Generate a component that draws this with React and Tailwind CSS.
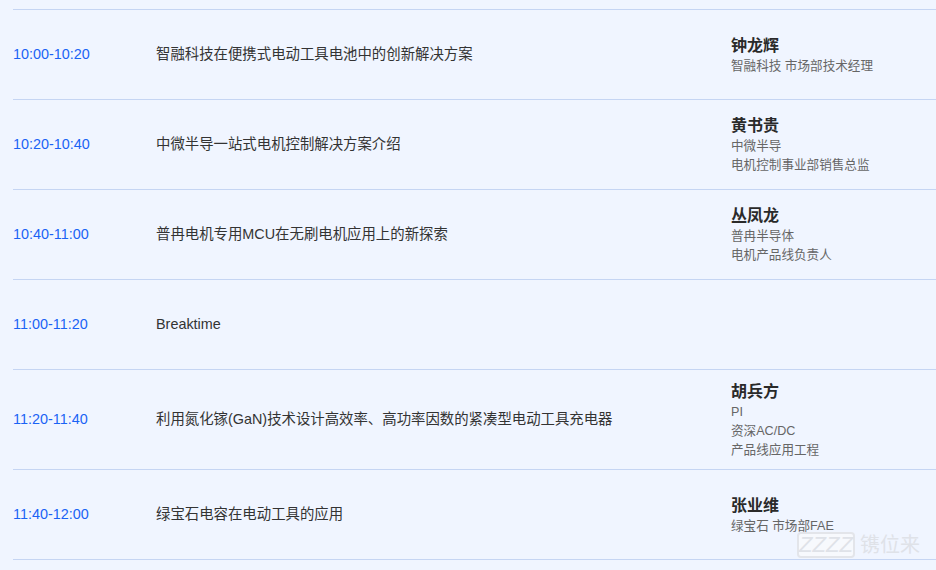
import React from "react";

const rows = [
  { time: "10:00-10:20", title: "智融科技在便携式电动工具电池中的创新解决方案", name: "钟龙辉", info: ["智融科技 市场部技术经理"] },
  { time: "10:20-10:40", title: "中微半导一站式电机控制解决方案介绍", name: "黄书贵", info: ["中微半导", "电机控制事业部销售总监"] },
  { time: "10:40-11:00", title: "普冉电机专用MCU在无刷电机应用上的新探索", name: "丛凤龙", info: ["普冉半导体", "电机产品线负责人"] },
  { time: "11:00-11:20", title: "Breaktime" },
  { time: "11:20-11:40", title: "利用氮化镓(GaN)技术设计高效率、高功率因数的紧凑型电动工具充电器", name: "胡兵方", info: ["PI", "资深AC/DC", "产品线应用工程"], tall: true },
  { time: "11:40-12:00", title: "绿宝石电容在电动工具的应用", name: "张业维", info: ["绿宝石 市场部FAE"] },
];

function Row({ row }) {
  return (
    <div className={`flex items-center border-b border-[#c5d5f3] ${row.tall ? "h-[100px]" : "h-[90px]"}`}>
      <div className="w-[143px] shrink-0 text-[14.4px] text-[#1a63f5]">{row.time}</div>
      <div className="w-[575px] shrink-0 text-[14.4px] text-[#333333]">{row.title}</div>
      {row.name && (
        <div className="pt-[1px]">
          <div className="text-[16px] leading-[22px] font-bold text-[#2a2a2a]">{row.name}</div>
          {row.info.map((line) => (
            <div key={line} className="text-[12.6px] leading-[19px] text-[#666666]">{line}</div>
          ))}
        </div>
      )}
    </div>
  );
}

export default function App() {
  return (
    <div className="relative h-[570px] w-[936px] overflow-hidden bg-[#f0f5ff] pl-[13px] pt-[9px] font-['Liberation_Sans','Noto_Sans_CJK_SC',sans-serif]">
      <div className="border-t border-[#c5d5f3]">
        {rows.map((row) => (
          <Row key={row.time} row={row} />
        ))}
      </div>

      {/* watermark */}
      <div className="absolute left-[797px] top-[532px] flex items-center gap-[5px] text-[#dfe2e8]">
        <div className="flex h-[26px] w-[58px] items-center justify-center rounded-[4px] border-2 border-[#e3e5ea] bg-[#f7f9fd] text-[22px] leading-none italic">
          ZZZZ
        </div>
        <div className="text-[20px] leading-none">镌位来</div>
      </div>
    </div>
  );
}
